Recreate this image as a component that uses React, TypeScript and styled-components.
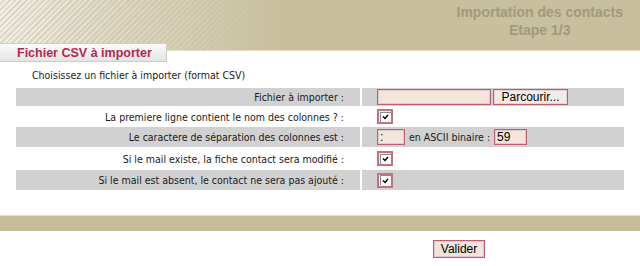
import React from "react";
import styled, { createGlobalStyle } from "styled-components";

const Global = createGlobalStyle`
  html, body { margin: 0; padding: 0; background: #ffffff; }
  body { font-family: "Liberation Sans", Arial, sans-serif; }
`;

const textFont = `"DejaVu Sans Condensed", "DejaVu Sans", sans-serif`;

const Page = styled.div`
  width: 640px;
  display: flex;
  flex-direction: column;
`;

const Header = styled.header`
  height: 50px;
  border-bottom: 1px solid #e2dcc6;
  display: flex;
  justify-content: flex-end;
  background:
    linear-gradient(to right, rgba(199,191,157,0) 0px, rgba(199,191,157,0.5) 130px, #c7bf9d 280px),
    repeating-linear-gradient(135deg, #f2efe7 0 2px, #dcd7c6 2px 4px);
`;

const HeaderTitle = styled.h1`
  margin: 0;
  padding: 3px 17px 0 0;
  text-align: center;
  font-family: "Liberation Sans", Arial, sans-serif;
  font-weight: bold;
  font-size: 14px;
  line-height: 18px;
  color: #a09a7c;
`;

const Tab = styled.div`
  margin-top: -8px;
  width: 167px;
  height: 19px;
  box-sizing: border-box;
  border: 1px solid #cbcbcb;
  border-left: none;
  background: linear-gradient(to bottom, #fbfbfb, #e4e4e4);
  padding-left: 17px;
  font-family: "Liberation Sans", Arial, sans-serif;
  font-weight: bold;
  font-size: 12.5px;
  line-height: 18px;
  color: #b3294e;
`;

const Intro = styled.p`
  margin: 7px 0 0 32px;
  font-family: ${textFont};
  font-stretch: condensed;
  font-size: 10.5px;
  line-height: 13px;
  color: #222;
`;

const FormGrid = styled.div`
  margin: 6px 16px 0 16px;
  display: grid;
  grid-template-columns: 344px 1fr;
  column-gap: 2px;
  row-gap: 2px;
`;

const Label = styled.div<{ $shade: boolean; $h: number }>`
  height: ${(p) => p.$h}px;
  background: ${(p) => (p.$shade ? "#d1d1d1" : "#ffffff")};
  display: flex;
  align-items: center;
  justify-content: flex-end;
  padding-right: 16px;
  font-family: ${textFont};
  font-stretch: condensed;
  font-size: 10.5px;
  color: #1a1a1a;
`;

const Value = styled.div<{ $shade: boolean; $h: number }>`
  height: ${(p) => p.$h}px;
  background: ${(p) => (p.$shade ? "#d1d1d1" : "#ffffff")};
  display: flex;
  align-items: center;
  padding-left: 15px;
  color: #1a1a1a;
`;

const TextField = styled.span<{ $w: number }>`
  box-sizing: border-box;
  width: ${(p) => p.$w}px;
  height: 16px;
  background: #f3e5da;
  border: 1px solid #b8606f;
  box-shadow: inset 0 0 0 1px #e8c7cb;
  font-size: 12px;
  line-height: 14px;
  padding-left: 2px;
  color: #000;
  font-family: "Liberation Sans", Arial, sans-serif;
`;

const BrowseButton = styled.span`
  box-sizing: border-box;
  margin-left: 2px;
  width: 75px;
  height: 16px;
  background: #f1ece6;
  border: 1px solid #b8606f;
  box-shadow: inset 0 0 0 1px #ead2d4;
  font-family: "Liberation Sans", Arial, sans-serif;
  font-size: 12px;
  line-height: 14px;
  text-align: center;
  color: #000;
`;

const CheckBox = styled.span`
  box-sizing: border-box;
  width: 16px;
  height: 15px;
  border: 2px solid #c4707e;
  background: #f4f4f4;
  display: flex;
  align-items: center;
  justify-content: center;
`;

const CheckInner = styled.span`
  box-sizing: border-box;
  width: 11px;
  height: 10px;
  border-top: 1px solid #8c8c8c;
  border-left: 1px solid #8c8c8c;
  background: #fdfdfd;
  display: flex;
  align-items: center;
  justify-content: center;
`;

const Inline = styled.span`
  margin: 0 4px 0 4px;
  font-family: ${textFont};
  font-stretch: condensed;
  font-size: 10.5px;
`;

const Band = styled.div`
  margin-top: 25px;
  height: 15px;
  border-top: 1px solid #e3dfcf;
  background: #c6be9b;
`;

const Footer = styled.div`
  display: flex;
  padding: 9px 0 0 433px;
`;

const SubmitButton = styled.button`
  box-sizing: border-box;
  width: 52px;
  height: 18px;
  padding: 0;
  background: #f2e4dc;
  border: 1px solid #b8606f;
  box-shadow: inset 0 0 0 1px #e6c4c8;
  font-family: "Liberation Sans", Arial, sans-serif;
  font-size: 12px;
  color: #000;
`;

const Check = () => (
  <CheckBox>
    <CheckInner>
      <svg width="7" height="6" viewBox="0 0 7 6">
        <path d="M1 2.5 L3 4.5 L6 1" stroke="#000" strokeWidth="1.5" fill="none" />
      </svg>
    </CheckInner>
  </CheckBox>
);

const rows: { label: string; h: number; content: React.ReactNode }[] = [
  {
    label: "Fichier à importer :",
    h: 18,
    content: (
      <>
        <TextField $w={114} />
        <BrowseButton>Parcourir...</BrowseButton>
      </>
    ),
  },
  { label: "La premiere ligne contient le nom des colonnes ? :", h: 17, content: <Check /> },
  {
    label: "Le caractere de séparation des colonnes est :",
    h: 20,
    content: (
      <>
        <TextField $w={28}>:</TextField>
        <Inline>en ASCII binaire :</Inline>
        <TextField $w={33}>59</TextField>
      </>
    ),
  },
  { label: "Si le mail existe, la fiche contact sera modifié :", h: 19, content: <Check /> },
  { label: "Si le mail est absent, le contact ne sera pas ajouté :", h: 20, content: <Check /> },
];

export default function App() {
  return (
    <Page>
      <Global />
      <Header>
        <HeaderTitle>
          Importation des contacts
          <br />
          Etape 1/3
        </HeaderTitle>
      </Header>
      <Tab>Fichier CSV à importer</Tab>
      <Intro>Choisissez un fichier à importer (format CSV)</Intro>
      <FormGrid>
        {rows.map((r, i) => (
          <React.Fragment key={i}>
            <Label $shade={i % 2 === 0} $h={r.h}>{r.label}</Label>
            <Value $shade={i % 2 === 0} $h={r.h}>{r.content}</Value>
          </React.Fragment>
        ))}
      </FormGrid>
      <Band />
      <Footer>
        <SubmitButton>Valider</SubmitButton>
      </Footer>
    </Page>
  );
}
